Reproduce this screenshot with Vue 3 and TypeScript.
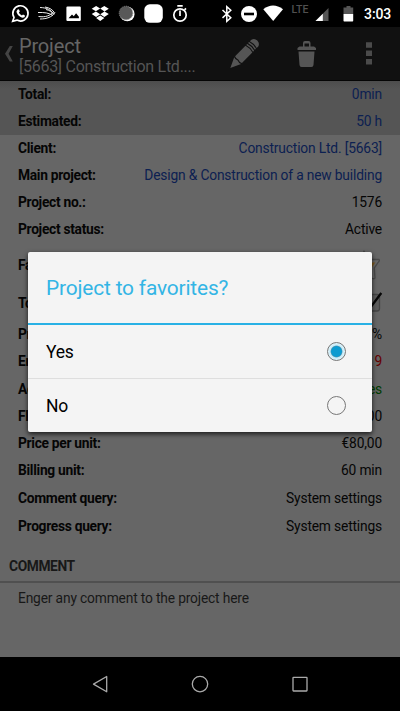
<script setup lang="ts">
import { ref } from 'vue'

interface Row {
  label: string
  value?: string
  height: number
  tone?: string
  icon?: 'star' | 'check'
}

const totals: Row[] = [
  { label: 'Total:', value: '0min', height: 27, tone: 'blue' },
  { label: 'Estimated:', value: '50 h', height: 27, tone: 'blue' },
]

const details: Row[] = [
  { label: 'Client:', value: 'Construction Ltd. [5663]', height: 27, tone: 'blue' },
  { label: 'Main project:', value: 'Design & Construction of a new building', height: 27, tone: 'blue' },
  { label: 'Project no.:', value: '1576', height: 27 },
  { label: 'Project status:', value: 'Active', height: 27 },
  { label: 'Favorite:', height: 44, icon: 'star' },
  { label: 'To do:', height: 33, icon: 'check' },
  { label: 'Progress:', value: '0 %', height: 28 },
  { label: 'Entries:', value: '9', height: 27, tone: 'red' },
  { label: 'Accounting:', value: 'Yes', height: 28, tone: 'green' },
  { label: 'Flat rate:', value: '€0,00', height: 27 },
  { label: 'Price per unit:', value: '€80,00', height: 27 },
  { label: 'Billing unit:', value: '60 min', height: 27 },
  { label: 'Comment query:', value: 'System settings', height: 28 },
  { label: 'Progress query:', value: 'System settings', height: 28 },
]

const options = ['Yes', 'No']
const selected = ref('Yes')
</script>

<template>
  <div class="screen">
    <header class="status">
      <svg class="status-icons" width="400" height="27" viewBox="0 0 400 27">
        <!-- messenger -->
        <path d="M12.700 21.300l1.300-3.900a7.600 7.600 0 1 1 2.900 2.700z" fill="none" stroke="#fff" stroke-width="1.700" />
        <path d="M17.500 9.700c.6-.6 1.300-.5 1.600.1l.7 1.600-.9 1.200c.7 1.400 1.600 2.200 3 2.900l1.100-1.100 1.900 1c.3.9-.4 2-1.500 2.200-3 .5-7-3.600-6.900-6.300z" fill="#fff" />
        <!-- striped wing -->
        <g fill="none" stroke="#eee" stroke-width="1">
          <path d="M40 7.500c7 .2 11 2.500 13 6M45 7c5 .8 8 3 9.500 6M38 12.500c6-.2 11 .3 15 3M38.500 16.500c7 1 11.500-.8 15-4.500M40 19c7 0 12-2 15-6.500M46 9.500c4 1 6 2.500 8 5" />
        </g>
        <!-- image -->
        <path fill-rule="evenodd" d="M67.500 6.500h12.200q1.100 0 1.100 1.100v12.300q0 1.100-1.100 1.100H67.500q-1.100 0-1.100-1.100V7.600q0-1.100 1.100-1.100zM68.500 18.300h10.400v-1.500l-2.800-3.500-2.300 3-1.800-1.800z" fill="#fff" />
        <!-- open box -->
        <path d="M96.100 6.100l4.100 2.500-4.300 2.700-4.200-2.600zM104.300 6.100l4.500 2.600-4.300 2.700-4.300-2.800zM91.700 14.100l4.200-2.600 4.300 2.800-4.100 2.600zM104.500 11.500l4.300 2.600-4.500 2.800-4.100-2.600zM96.100 18l4.100-2.600 4.200 2.600-4.200 3z" fill="#fff" />
        <!-- moon -->
        <circle cx="127.300" cy="14" r="7.300" fill="#fff" />
        <circle cx="126" cy="13" r="6.800" fill="#585858" stroke="#888" stroke-width="1" stroke-dasharray="1 1" />
        <rect x="144.300" y="4.300" width="18.500" height="18.500" rx="5.500" fill="#fff" />
        <!-- stopwatch -->
        <g fill="none" stroke="#fff" stroke-width="1.700">
          <circle cx="180" cy="15" r="6.200" /><path d="M177.300 5.800h5.400M180 10.500v5.500M184.500 9.800l1.500-1.500" />
        </g>
        <!-- bluetooth -->
        <path d="M222.500 10l8.300 7.700-4 3.600V6.700l4 3.500-8.300 7.700" fill="none" stroke="#fff" stroke-width="1.500" />
        <circle cx="249" cy="14" r="8" fill="#fff" />
        <rect x="244" y="12.700" width="10" height="2.600" fill="#000" />
        <path d="M263.300 9.200Q273 1.700 283 9.200L273.200 21z" fill="#fff" />
        <path d="M328.500 8v13h-13z" fill="#555" /><path d="M322.800 13.700V21h-7.300z" fill="#fff" />
        <path d="M346.500 6h4v1.500h2.700V14h-9.700V7.500h3z" fill="#555" />
        <path d="M343.500 14h9.700v6.800q0 .7-.7.7h-8.300q-.7 0-.7-.7z" fill="#fff" />
      </svg>
      <span class="lte">LTE</span>
      <span class="clock">3:03</span>
    </header>

    <nav class="appbar">
      <svg class="back" width="19" height="53" viewBox="0 0 19 53">
        <path d="M9.800 19H12.800L8.600 26.700l4.200 7.700h-3L5 26.700z" fill="#444" />
      </svg>
      <div class="heading">
        <div class="title">Project</div>
        <div class="subtitle">[5663] Construction Ltd....</div>
      </div>
      <svg class="actions" width="200" height="53" viewBox="200 27 200 53">
        <g transform="translate(230.300 68) rotate(-45.500)" fill="#555">
          <path d="M0 0L10.500-4.800q-1.200 2.300 0 4.800-1.200 2.500 0 4.800z" />
          <path d="M11.700-4.800H26.500q1.500 4.800 0 9.600H11.700q-1.200-2.300 0-4.800-1.200-2.500 0-4.800z" />
          <path d="M27.600-4.800h1.500q1.500 4.800 0 9.600h-1.500q1.500-4.800 0-9.600zM30.200-4.800h1.500q1.500 4.800 0 9.600h-1.500q1.500-4.800 0-9.600z" />
          <path d="M32.800-4.800H35q3.500 1 3.500 4.800T35 4.800h-2.200q1.500-4.800 0-9.600z" />
        </g>
        <path d="M297.500 50v-2l2-1.500h3.500v-3.500q0-2 2-2h3.500q2 0 2 2v3.500h3.500l2 1.500v2zM304.500 46.500h4.500v-3h-4.500zM298.500 51.500h16l-1 13.500q-.2 2-2 2h-10q-1.800 0-2-2z" fill="#555" fill-rule="evenodd" />
        <path d="M366 42.300h6v5.500h-6zM366 50.500h6V56h-6zM366 59h6v5.500h-6z" fill="#4b4b4b" />
      </svg>
    </nav>

    <main class="content">
      <section class="totals">
        <div v-for="row in totals" :key="row.label" class="row" :style="{ height: row.height + 'px' }">
          <b>{{ row.label }}</b><span :class="row.tone">{{ row.value }}</span>
        </div>
      </section>
      <section>
        <div v-for="row in details" :key="row.label" class="row" :style="{ height: row.height + 'px' }">
          <b>{{ row.label }}</b>
          <svg v-if="row.icon === 'star'" class="item-icon" width="32" height="30" viewBox="0 0 32 30">
            <path d="M13 1l4.500 8.500 10.500 0q.8 1-.3 2.200L23.300 18l.7 10q-1 1.200-2.500.5L13 24l-8 4 1.500-10L0 11l9-1.500z" fill="#6b6b6b" stroke="#4a4a4a" stroke-width="1.300" stroke-linejoin="round" />
            <path d="M18 12.500h6.200l-3 4.500-4 1z" fill="#805b20" />
          </svg>
          <svg v-else-if="row.icon === 'check'" class="item-icon" width="24" height="24" viewBox="0 0 24 24">
            <rect x="2.500" y="3.500" width="18" height="16.500" rx="2.500" fill="#5c5c5c" stroke="#444" stroke-width="1.300" />
            <path d="M7 11l4.500 5.500L22.300 2" fill="none" stroke="#060606" stroke-width="2.300" />
          </svg>
          <span v-else :class="row.tone">{{ row.value }}</span>
        </div>
      </section>
      <h2 class="section-title">COMMENT</h2>
      <p class="comment">Enger any comment to the project here</p>
    </main>

    <footer class="navbar">
      <svg width="400" height="54" viewBox="0 0 400 54" fill="none" stroke="#aaa" stroke-width="1.300">
        <path d="M106.700 19.500v15.300L93.500 27.100z" stroke-linejoin="round" />
        <circle cx="200" cy="27.100" r="7.700" />
        <rect x="293" y="20.300" width="14" height="13.700" rx=".5" />
      </svg>
    </footer>

    <div class="dialog" role="dialog">
      <div class="dialog-title">Project to favorites?</div>
      <label v-for="option in options" :key="option" class="option">
        <span>{{ option }}</span>
        <input v-model="selected" type="radio" :value="option" />
      </label>
    </div>
  </div>
</template>

<style>
body { overflow: hidden; background: #000; }
</style>

<style scoped>
.screen {
  position: relative;
  display: flex;
  flex-direction: column;
  width: 400px;
  height: 711px;
  font-family: Roboto, sans-serif;
  font-size: 13.800px;
  letter-spacing: -.17px;
  background: #666;
  color: #050505;
}
.status { position: relative; height: 27px; background: #000; }
.status-icons, .navbar svg { display: block; }
.lte { position: absolute; left: 291.500px; top: 4px; font-size: 10.500px; line-height: 12px; font-weight: 500; letter-spacing: .1px; color: #505050; }
.clock { position: absolute; right: 9px; top: 5px; font-size: 14px; line-height: 18px; font-weight: 500; color: #fff; }
.appbar { display: flex; height: 53px; background: #111; border-bottom: 1px solid #050505; color: #666; }
.back { flex: none; }
.heading { width: 181px; padding-top: 7px; white-space: nowrap; }
.title { font-size: 20px; line-height: 24px; }
.subtitle { font-size: 16px; line-height: 17px; letter-spacing: -.27px; color: #555; }
.actions { flex: none; }
.content { flex: 1; }
.totals { background: linear-gradient(#4d4d4d, #555 8px); }
.row {
  display: flex;
  align-items: center;
  justify-content: space-between;
  box-sizing: border-box;
  padding: 0 18px 1px;
  line-height: 18px;
  white-space: nowrap;
}
.row b { font-weight: 700; letter-spacing: -.3px; }
.blue { color: #0c2051; }
.red { color: #650000; }
.green { color: #003c00; }
.item-icon { margin-right: -1px; }
.section-title {
  margin: 0;
  height: 43px;
  padding: 17px 9px 0;
  box-sizing: border-box;
  border-bottom: 2px solid #505050;
  font-size: 13.800px;
  line-height: 18px;
  font-weight: 700;
  letter-spacing: -.4px;
  color: #181818;
}
.comment { margin: 0; padding: 6px 18px; line-height: 18px; color: #181818; }
.navbar { height: 54px; background: #000; }
.dialog {
  position: absolute;
  left: 28px;
  top: 252px;
  width: 344px;
  height: 180px;
  display: flex;
  flex-direction: column;
  border-radius: 2px;
  background: #f4f4f4;
  box-shadow: 0 2px 5px rgba(0, 0, 0, .75);
}
.dialog-title { height: 71px; border-bottom: 2px solid #29b1e5; font-size: 20.900px; line-height: 73px; padding-left: 18px; color: #33b5e5; }
.option { flex: 1; display: flex; align-items: center; justify-content: space-between; padding: 0 26px 0 18px; font-size: 17.500px; letter-spacing: -.3px; color: #000; }
.option + .option { border-top: 1px solid #dedede; }
input {
  appearance: none;
  width: 19px;
  height: 19px;
  margin: 0;
  border: 1px solid #777;
  border-radius: 50%;
}
input:checked { background: radial-gradient(circle, #0d9bd0 5px, #5b9bb3 5.500px, #c5eaf7 6.300px, #e2f5fb 8.500px); }
</style>
